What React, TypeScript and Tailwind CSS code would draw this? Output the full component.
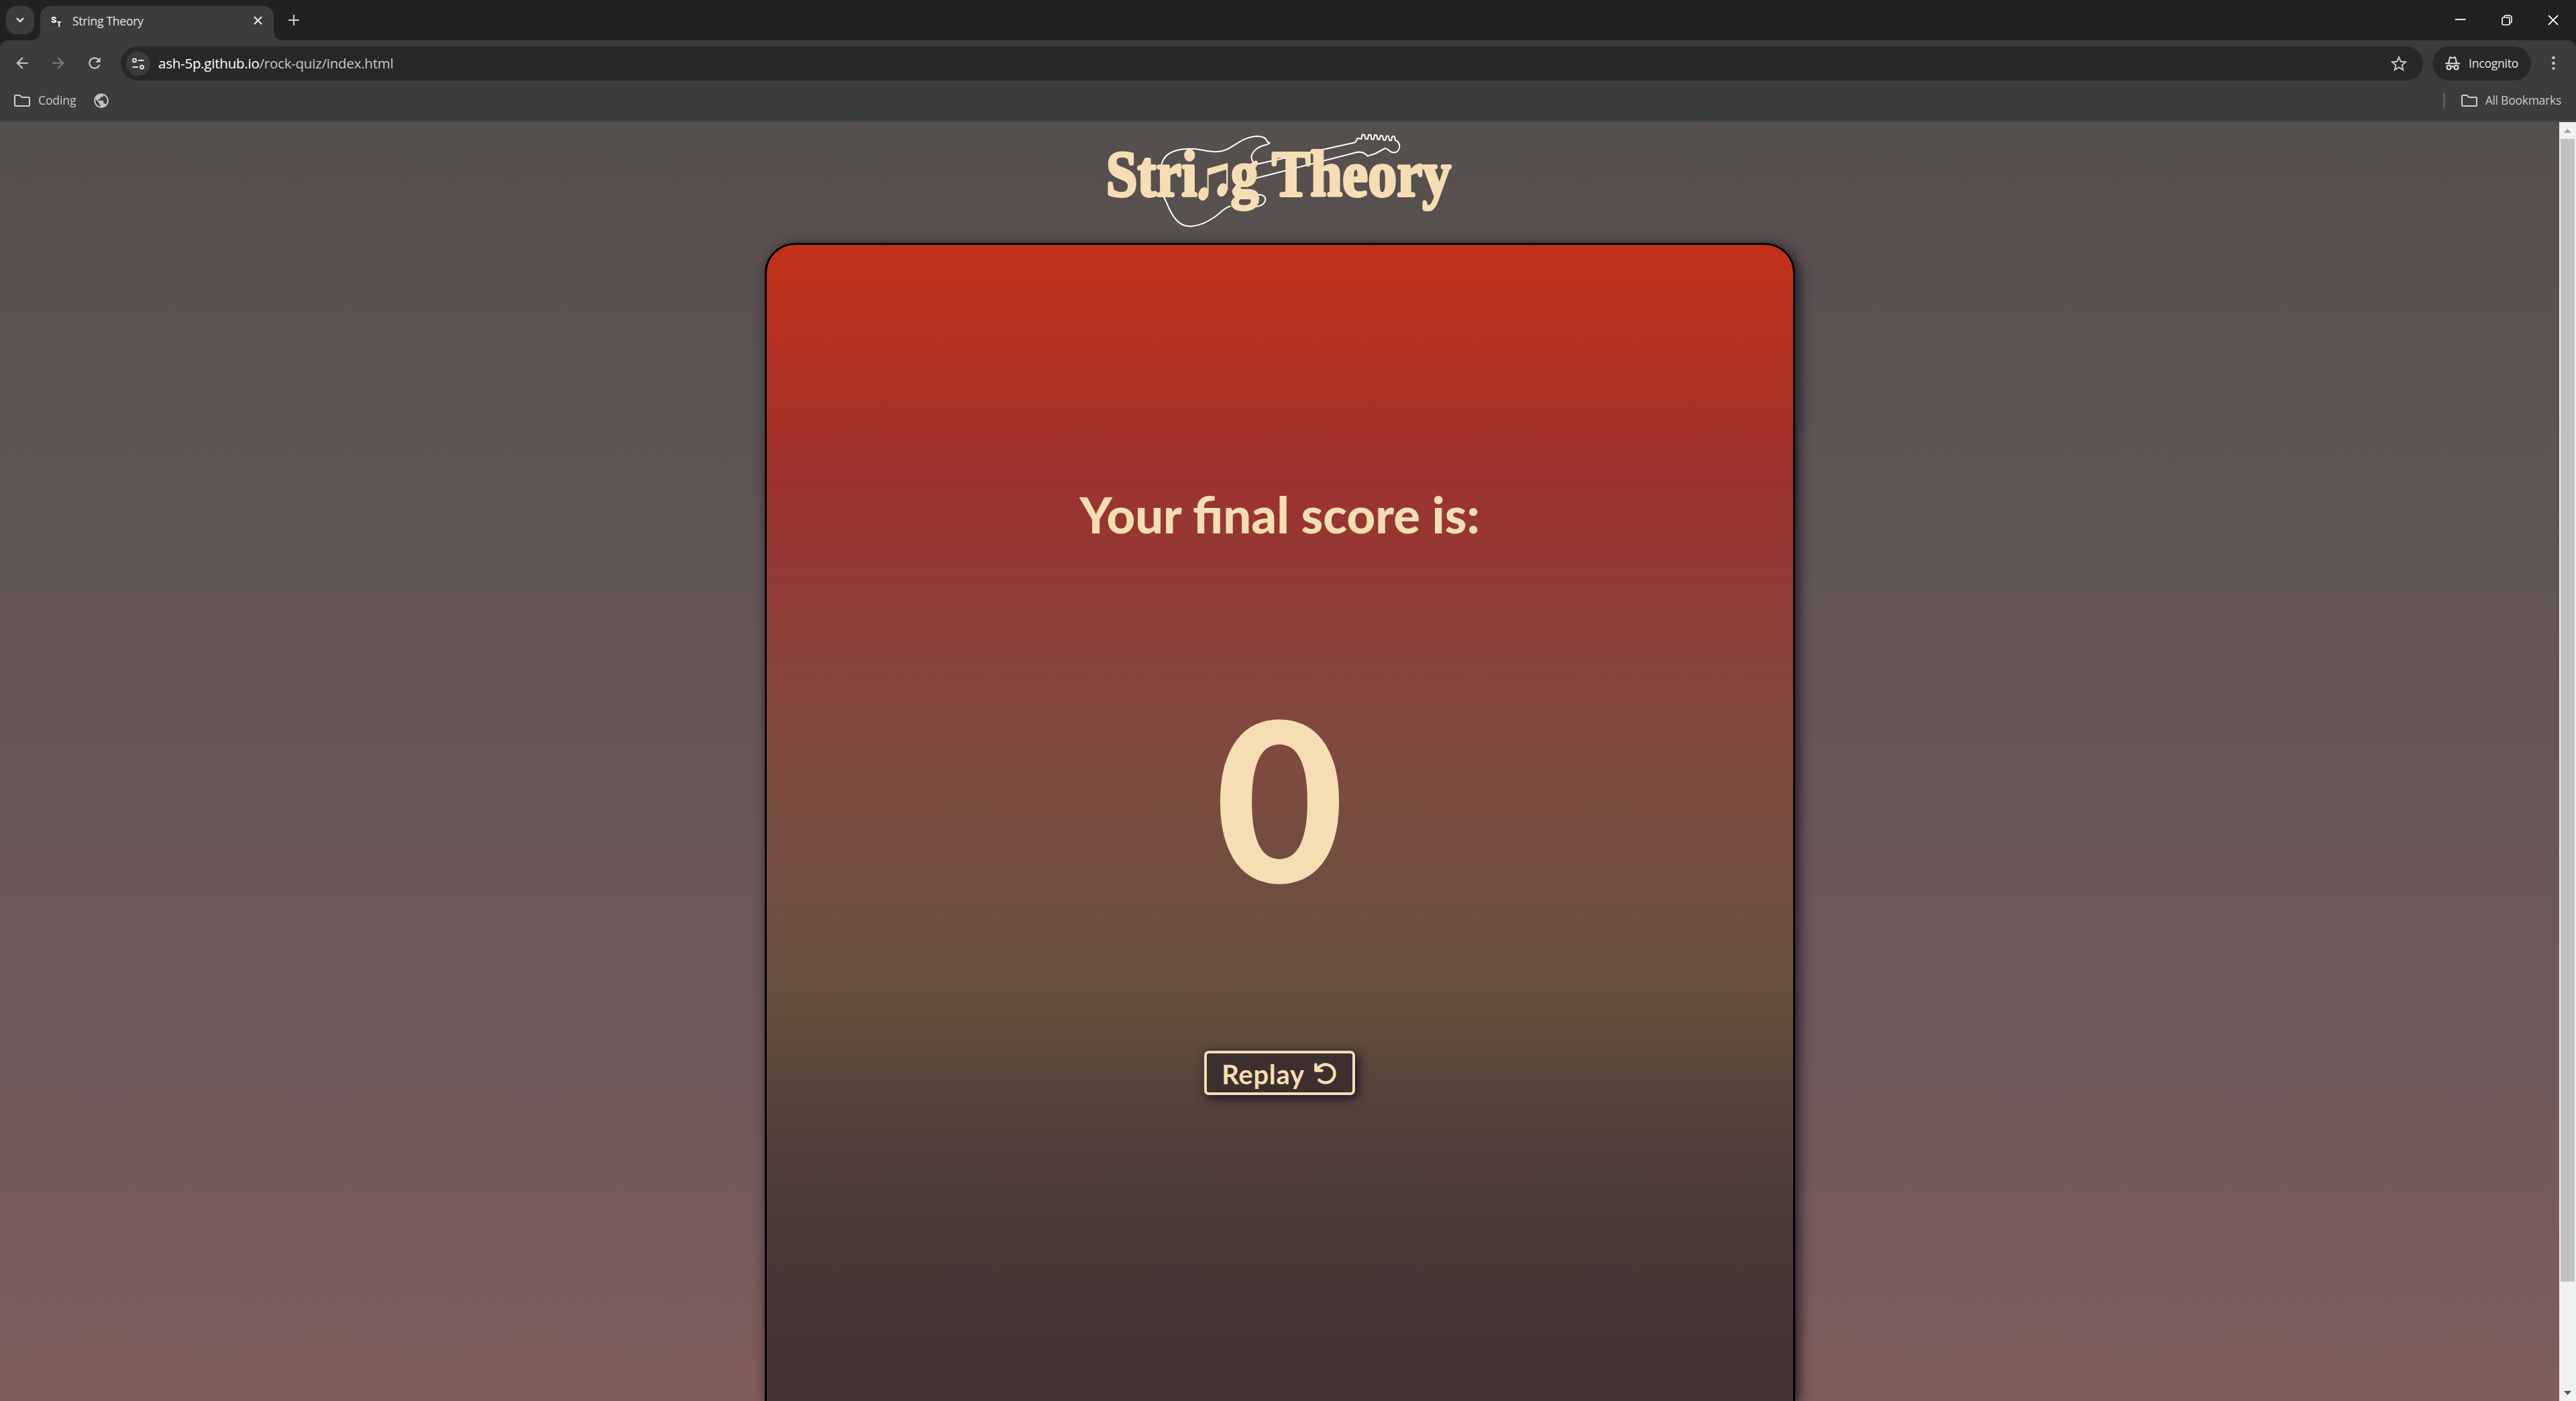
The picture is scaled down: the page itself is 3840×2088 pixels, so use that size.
import React from "react";
import { FaArrowRotateLeft } from "react-icons/fa6";
import { MdArrowBack, MdArrowForward, MdPublic, MdRefresh, MdStarOutline } from "react-icons/md";

const UI = "font-['Open_Sans','Noto_Sans',sans-serif]";

function Folder() {
  return (
    <svg className="h-[18px] w-6 shrink-0" viewBox="0 0 24 18" fill="none" stroke="#d0d0d0" strokeWidth="2" strokeLinejoin="round">
      <path d="M1 2.5Q1 1 2.500 1H8.500L11.500 4H21.500Q23 4 23 5.500V15.500Q23 17 21.500 17H2.500Q1 17 1 15.500Z" />
    </svg>
  );
}

function Favicon() {
  return (
    <svg className="h-6 w-6 shrink-0" viewBox="0 0 24 24">
      <path d="M2 1L6 7H17L22 3Q24 5 20 10Q24 16 23 21Q22 23 19 23H4Q0 22 1 17Q4 12 3 7Q0 4 2 1Z" fill="#373737" stroke="#4a4a4a" strokeWidth=".8" />
      <text x="4" y="16" fontSize="13" fontWeight="900" fill="#fff" fontFamily="Roboto, sans-serif">S</text>
      <text x="13" y="22" fontSize="10" fontWeight="900" fill="#fff" fontFamily="Roboto, sans-serif">T</text>
    </svg>
  );
}

function TabFlare({ flip }: { flip?: boolean }) {
  return (
    <svg className={flip ? "h-[15px] w-[15px] -scale-x-100" : "h-[15px] w-[15px]"} viewBox="0 0 15 15">
      <path d="M15 0V15H0Q15 15 15 0Z" fill="#3c3c3c" />
    </svg>
  );
}

function TitleBar() {
  return (
    <div className="flex h-[60px] items-end bg-[#1f2220]">
      <div className="ml-[9px] mb-[9px] flex h-[42px] w-[42px] items-center justify-center rounded-[15px] bg-[#3c3c3c]">
        <svg className="h-2 w-3" viewBox="0 0 12 8" fill="none" stroke="#e3e3e3" strokeWidth="2.400">
          <path d="M1 1L6 6L11 1" />
        </svg>
      </div>
      <div className="-ml-[6px] flex items-end">
        <TabFlare />
        <div className="flex h-[51px] w-[348px] items-center rounded-t-[15px] bg-[#3c3c3c] pb-[9px] pl-3 pr-[17px]">
          <Favicon />
          <span className="ml-3 mt-[3px] grow text-[17.500px] leading-none tracking-[-0.250px] text-[#e3e3e3]">String Theory</span>
          <svg className="h-[13px] w-[13px]" viewBox="0 0 13 13" stroke="#e3e3e3" strokeWidth="2.200">
            <path d="M1 1L12 12M12 1L1 12" />
          </svg>
        </div>
        <TabFlare flip />
      </div>
      <svg className="mb-[22px] ml-[7px] h-4 w-4" viewBox="0 0 16 16" stroke="#d4d4d4" strokeWidth="2">
        <path d="M8 0V16M0 8H16" />
      </svg>
      <div className="mb-[22px] ml-auto mr-[26px] flex items-center gap-[53px] text-white">
        <svg className="h-4 w-4" viewBox="0 0 16 16" stroke="currentColor" strokeWidth="1.800">
          <path d="M0 7H15.500" />
        </svg>
        <svg className="h-4 w-4" viewBox="0 0 16 16" fill="none" stroke="currentColor" strokeWidth="1.600">
          <rect x="1" y="4" width="11" height="11" rx="2" />
          <path d="M4 3Q4 1 6.500 1H11Q15 1 15 5V9Q15 12 13 12" />
        </svg>
        <svg className="h-4 w-4" viewBox="0 0 16 16" stroke="currentColor" strokeWidth="1.800">
          <path d="M1 1L15 15M15 1L1 15" />
        </svg>
      </div>
    </div>
  );
}

function AddressBar() {
  return (
    <div className="flex h-[60px] items-end">
      <div className="mb-[13px] ml-5 flex items-center gap-7 text-[26px] text-[#c7c7c7]">
        <MdArrowBack />
        <MdArrowForward className="text-[#7c7c7c]" />
        <MdRefresh />
      </div>
      <div className="ml-[26px] flex h-[51px] w-[3432px] shrink-0 items-center rounded-full bg-[#282828] pl-2 pr-[21px]">
        <div className="flex h-9 w-9 items-center justify-center rounded-full bg-[#3c3c3c]">
          <svg className="h-[18px] w-[18px]" viewBox="0 0 18 18" fill="none" stroke="#e3e3e3" strokeWidth="2">
            <circle cx="3.500" cy="4" r="2.500" />
            <path d="M9 4H17.500M0.500 14H9" />
            <circle cx="14.500" cy="14" r="2.500" />
          </svg>
        </div>
        <span className="ml-3 text-[20.500px] leading-none tracking-[-0.230px] text-[#c7c7c7]">
          <span className="text-white">ash-5p.github.io</span>/rock-quiz/index.html
        </span>
        <MdStarOutline className="ml-auto text-[30px] text-[#c7c7c7]" />
      </div>
      <div className="ml-[14px] flex h-[51px] w-[147px] shrink-0 items-center rounded-full bg-[#282828] pl-[19px]">
        <svg className="h-[21px] w-[22px] shrink-0" viewBox="0 0 22 21" fill="none" stroke="#e3e3e3" strokeWidth="2">
          <path d="M0 10.500H22" />
          <path d="M5 10L7 1.500Q8 .8 9.500 2Q11 2.600 12.500 2Q14 .8 15 1.500L17 10" />
          <circle cx="5.500" cy="16.500" r="3" />
          <circle cx="16.500" cy="16.500" r="3" />
          <path d="M8.500 16Q11 14 13.500 16" />
        </svg>
        <span className="ml-[13px] text-[17.500px] leading-none tracking-[-0.200px] text-[#e3e3e3]">Incognito</span>
      </div>
      <svg className="mb-4 ml-[31px] h-5 w-[5px]" viewBox="0 0 5 20" fill="#c7c7c7">
        <circle cx="2.500" cy="2" r="2.300" />
        <circle cx="2.500" cy="10.300" r="2.300" />
        <circle cx="2.500" cy="18" r="2" />
      </svg>
    </div>
  );
}

function BookmarksBar() {
  return (
    <div className="flex h-[60px] items-center pl-[21px] pr-[22px] text-[17.500px] leading-none text-[#c7c7c7]">
      <Folder />
      <span className="ml-3 tracking-[-0.100px]">Coding</span>
      <MdPublic className="ml-[25px] text-[26px] text-[#bdc1c6]" />
      <div className="ml-auto h-6 w-[3px] rounded bg-[#5c5c5c]" />
      <div className="ml-6 flex items-center">
        <Folder />
        <span className="ml-3 whitespace-nowrap tracking-[-0.250px]">All Bookmarks</span>
      </div>
    </div>
  );
}

function Logo() {
  return (
    <svg className="mt-2 h-40 w-[540px] shrink-0 overflow-visible" viewBox="0 0 1620 480">
      <path
        fill="none"
        stroke="#fff"
        strokeWidth="6"
        strokeLinejoin="round"
        d="M706 164L1147 67L1157 48L1174 51L1178 32H1188L1193 52H1202L1206 33H1216L1220 53H1229L1233 34H1242L1247 54H1255L1259 37H1268L1273 56H1282L1286 38H1295L1300 58H1308L1312 40H1322L1326 58C1352 63 1352 110 1320 112C1298 112 1292 91 1280 93L1236 117L1202 128C1188 110 1170 107 1150 112L706 226C670 232 662 245 663 266M704 301C742 296 752 318 740 335C730 353 695 356 666 355M590 352C558 358 545 385 510 405C475 430 440 441 404 442C355 440 330 395 313 360C302 333 292 305 275 292C284 262 272 225 278 182C282 120 330 97 400 95C450 93 490 112 530 108C600 105 620 45 708 39C738 40 750 52 752 62L764 70L752 76C735 82 720 80 697 103C676 125 678 153 706 164"
      />
      <g fill="#f5deb3" stroke="#f5deb3" strokeWidth="12" strokeLinejoin="bevel" fontFamily="'Liberation Serif', serif" fontWeight="700" fontSize="290">
        <text x="32" y="305" textLength="408" lengthAdjust="spacingAndGlyphs">Stri</text>
        <text x="590" y="305" textLength="124" lengthAdjust="spacingAndGlyphs">g</text>
        <text x="774" y="305" textLength="802" lengthAdjust="spacingAndGlyphs">Theory</text>
      </g>
      <g fill="#f5deb3">
        <path d="M485 184L577 158V280H570V188L491 213V290H485Z" />
        <ellipse cx="468" cy="297" rx="22" ry="31" transform="rotate(18 468 297)" />
        <ellipse cx="552" cy="279" rx="22" ry="31" transform="rotate(18 552 279)" />
      </g>
    </svg>
  );
}

function ResultCard() {
  return (
    <main className="mt-3 flex w-[1536px] grow flex-col items-center rounded-t-[45px] border-[3px] border-b-0 border-black bg-[linear-gradient(180deg,#c43118_0px,#9d322e_345px,#7f4a40_755px,#6a503f_1080px,#634d3d_1150px,#51403a_1330px,#483836_1500px,#433333_1726px)] font-['Lato',sans-serif] text-[#f5deb3] shadow-[5px_5px_20px_0px_#1c1628]">
      <h1 className="mt-[352px] whitespace-nowrap text-[74px] font-black leading-[100px]">Your final score is:</h1>
      <p className="mt-[170px] text-[331px] font-black leading-[400px]">0</p>
      <button className="mt-[179px] flex h-[66px] w-[225px] shrink-0 items-center justify-center gap-[13px] rounded-[7px] border-4 border-[#f5deb3] bg-[#3c302f] shadow-[4px_4px_16px_1px_#1c1628]">
        <span className="pt-[3px] text-[40px] font-bold leading-none tracking-[0.700px]">Replay</span>
        <FaArrowRotateLeft className="mt-0.5 shrink-0 text-[36px]" />
      </button>
    </main>
  );
}

function Scrollbar() {
  return (
    <div className="flex w-[25px] shrink-0 flex-col items-center bg-[#f1f1f1]">
      <div className="flex h-[25px] items-center justify-center">
        <svg className="h-1.5 w-[11px]" viewBox="0 0 11 6" fill="#a3a3a3"><path d="M0 6L5.500 0L11 6Z" /></svg>
      </div>
      <div className="h-[1703px] w-[21px] bg-[#c1c1c1]" />
      <div className="mt-auto flex h-[25px] items-center justify-center">
        <svg className="h-1.5 w-[11px]" viewBox="0 0 11 6" fill="#505050"><path d="M0 0L5.500 6L11 0Z" /></svg>
      </div>
    </div>
  );
}

export default function App() {
  return (
    <div className="flex h-[2088px] w-[3840px] flex-col overflow-hidden">
      <header className={UI}>
        <TitleBar />
        <div className="bg-[#1f2220]">
          <div className="h-[122px] rounded-t-xl border-b-2 border-[#474847] bg-[#3c3c3c]">
            <AddressBar />
            <BookmarksBar />
          </div>
        </div>
      </header>
      <div className="flex h-[1906px]">
        <div className="flex grow flex-col items-center overflow-hidden bg-[linear-gradient(180deg,#554f4e_0%,#635655_40%,#70595a_75%,#7f5d5a_100%)]">
          <Logo />
          <ResultCard />
        </div>
        <Scrollbar />
      </div>
    </div>
  );
}
